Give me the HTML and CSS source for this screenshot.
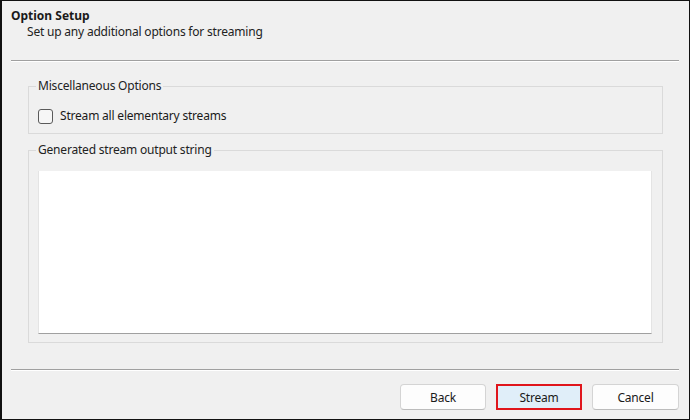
FILE: index.html
```html
<!DOCTYPE html>
<html>
<head>
<meta charset="utf-8">
<link rel="stylesheet" href="styles.css">
</head>
<body>
<div class="window">
  <div class="header">
    <div class="title">Option Setup</div>
    <div class="subtitle">Set up any additional options for streaming</div>
  </div>
  <div class="sep sep-top"></div>
  <div class="content">
    <fieldset class="group group-misc">
      <legend>Miscellaneous Options</legend>
      <label class="check-row"><span class="checkbox"></span><span>Stream all elementary streams</span></label>
    </fieldset>
    <fieldset class="group group-output">
      <legend>Generated stream output string</legend>
      <div class="output"></div>
    </fieldset>
  </div>
  <div class="sep sep-bottom"></div>
  <div class="buttons">
    <button class="btn">Back</button>
    <button class="btn btn-primary">Stream</button>
    <button class="btn btn-cancel">Cancel</button>
  </div>
</div>
</body>
</html>
```
FILE: styles.css
```css
html, body {
  margin: 0;
  padding: 0;
}
body {
  font-family: "Noto Sans", "Open Sans", sans-serif;
  font-size: 12px;
  color: #1a1a1a;
}
.window {
  width: 690px;
  height: 420px;
  box-sizing: border-box;
  background: #f0f0f0;
  border-top: 1px solid #111;
  border-right: 1px solid #111;
  border-bottom: 1px solid #111;
  border-left: 2px solid #111;
  display: flex;
  flex-direction: column;
  line-height: 16px;
  letter-spacing: -0.2px;
}
.header {
  padding: 7px 0 0 9px;
}
.title {
  font-weight: bold;
  letter-spacing: 0;
}
.subtitle {
  padding-left: 16px;
  color: #222;
}
.sep {
  border-top: 1px solid #a0a0a0;
  border-bottom: 1px solid #ffffff;
  margin-left: 9px;
  margin-right: 10px;
}
.sep-top {
  margin-top: 20px;
}
.content {
  padding: 0 26px 0 26px;
  margin-top: 16px;
}
.group {
  margin: 0;
  border: 1px solid #dadada;
  padding: 0 10px 0 9px;
  min-width: 0;
}
.group legend {
  padding: 0 2px;
  margin-left: -2px;
  line-height: 16px;
  color: #222;
}
.group-misc {
  padding-top: 15px;
  padding-bottom: 10px;
}
.group-output {
  margin-top: 8px;
  padding-top: 13px;
  padding-bottom: 8px;
}
.check-row {
  display: flex;
  align-items: center;
  height: 14px;
  gap: 7px;
  line-height: 14px;
}
.checkbox {
  width: 13px;
  height: 13px;
  border: 1px solid #5a5a5a;
  border-radius: 3px;
  background: #f6f6f6;
  flex: none;
}
.output {
  height: 162px;
  background: #ffffff;
  border-left: 1px solid #e4e4e4;
  border-right: 1px solid #e4e4e4;
  border-bottom: 1px solid #a0a0a0;
}
.sep-bottom {
  margin-top: 26px;
}
.buttons {
  display: flex;
  justify-content: flex-end;
  gap: 10px;
  padding-right: 10px;
  margin-top: 13px;
}
.btn {
  width: 86px;
  height: 26px;
  box-sizing: border-box;
  font-family: inherit;
  font-size: 12px;
  letter-spacing: -0.2px;
  color: #1a1a1a;
  background: #fdfdfd;
  border: 1px solid #d4d4d4;
  border-bottom-color: #bcbcbc;
  border-radius: 4px;
  padding: 0;
}
.btn-primary {
  background: #e0eef9;
  border: 2px solid #e0151b;
  border-radius: 0;
}
.btn-cancel {
  width: 87px;
}
```
